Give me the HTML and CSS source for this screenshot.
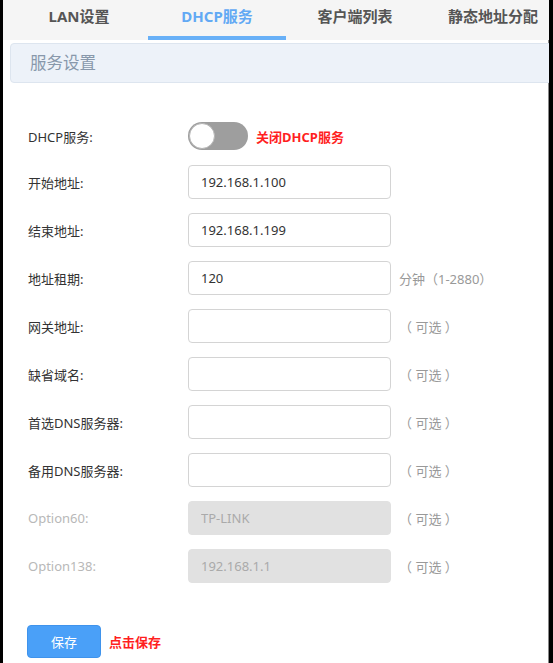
FILE: index.html
```html
<!DOCTYPE html>
<html lang="zh-CN">
<head>
<meta charset="utf-8">
<title>DHCP服务</title>
<link rel="stylesheet" href="styles.css">
</head>
<body>
<div class="frame">
  <div class="tabs">
    <div class="tab">LAN设置</div>
    <div class="tab active">DHCP服务</div>
    <div class="tab">客户端列表</div>
    <div class="tab">静态地址分配</div>
  </div>
  <div class="content">
    <div class="section-title">服务设置</div>
    <div class="form">
      <div class="row row-toggle">
        <label class="label">DHCP服务:</label>
        <span class="switch"><span class="knob"></span></span>
        <span class="note">关闭DHCP服务</span>
      </div>
      <div class="row">
        <label class="label">开始地址:</label>
        <input class="field" type="text" value="192.168.1.100">
      </div>
      <div class="row">
        <label class="label">结束地址:</label>
        <input class="field" type="text" value="192.168.1.199">
      </div>
      <div class="row">
        <label class="label">地址租期:</label>
        <input class="field" type="text" value="120">
        <span class="hint">分钟（1-2880）</span>
      </div>
      <div class="row">
        <label class="label">网关地址:</label>
        <input class="field" type="text" value="">
        <span class="hint">（ 可选 ）</span>
      </div>
      <div class="row">
        <label class="label">缺省域名:</label>
        <input class="field" type="text" value="">
        <span class="hint">（ 可选 ）</span>
      </div>
      <div class="row">
        <label class="label">首选DNS服务器:</label>
        <input class="field" type="text" value="">
        <span class="hint">（ 可选 ）</span>
      </div>
      <div class="row">
        <label class="label">备用DNS服务器:</label>
        <input class="field" type="text" value="">
        <span class="hint">（ 可选 ）</span>
      </div>
      <div class="row">
        <label class="label disabled">Option60:</label>
        <input class="field" type="text" value="TP-LINK" disabled>
        <span class="hint">（ 可选 ）</span>
      </div>
      <div class="row">
        <label class="label disabled">Option138:</label>
        <input class="field" type="text" value="192.168.1.1" disabled>
        <span class="hint">（ 可选 ）</span>
      </div>
    </div>
    <div class="actions">
      <button class="btn" type="button">保存</button>
      <span class="note">点击保存</span>
    </div>
  </div>
</div>
</body>
</html>
```

FILE: styles.css
```css
html, body {
  margin: 0;
  padding: 0;
  background: #fff;
}

body {
  font-family: "Noto Sans", "Noto Sans CJK SC", sans-serif;
  font-size: 13px;
  color: #333;
}

.frame {
  box-sizing: border-box;
  width: 553px;
  height: 663px;
  border-left: 3px solid #000;
  border-right: 4px solid #000;
  box-shadow: inset -1px 0 0 #888;
  overflow: hidden;
  background: #fff;
}

.tabs {
  display: flex;
  height: 40px;
  padding-left: 7px;
  background: #f5f5f5;
}

.tab {
  flex: 0 0 138px;
  box-sizing: border-box;
  height: 40px;
  line-height: 33px;
  text-align: center;
  font-size: 15px;
  font-weight: bold;
  color: #555;
  white-space: nowrap;
}

.tab.active {
  color: #62a9f4;
  border-bottom: 4px solid #68b0f7;
}

.content {
  padding-left: 7px;
}

.section-title {
  box-sizing: border-box;
  margin-top: 3px;
  margin-right: -12px;
  height: 40px;
  line-height: 38px;
  padding-left: 19px;
  border: 1px solid #dde5ef;
  border-radius: 4px;
  background: #edf2f9;
  font-size: 16.5px;
  color: #8898ab;
}

.form {
  padding-left: 18px;
  margin-top: 38px;
}

.row {
  display: flex;
  align-items: center;
  height: 34px;
  margin-bottom: 14px;
}

.row-toggle {
  height: 30px;
}

.label {
  flex: 0 0 160px;
  font-size: 13px;
  color: #333;
  white-space: nowrap;
}

.label.disabled {
  color: #b8b8b8;
}

.switch {
  position: relative;
  box-sizing: border-box;
  width: 60px;
  height: 28px;
  border-radius: 14px;
  background: #9e9e9e;
}

.knob {
  position: absolute;
  left: 1px;
  top: 1px;
  box-sizing: border-box;
  width: 26px;
  height: 26px;
  border-radius: 50%;
  background: #fff;
  border: 1px solid #b5b5b5;
}

.note {
  margin-left: 8px;
  color: #ff1f1f;
  font-weight: bold;
  font-size: 13px;
}

.field {
  box-sizing: border-box;
  width: 203px;
  height: 34px;
  margin: 0;
  padding: 0 12px;
  border: 1px solid #d4d4d4;
  border-radius: 4px;
  background: #fff;
  font-family: "Noto Sans", "Noto Sans CJK SC", sans-serif;
  font-size: 13px;
  color: #333;
  outline: none;
}

.field:disabled {
  background: #e1e1e1;
  border-color: #e1e1e1;
  color: #aaa;
}

.hint {
  margin-left: 8px;
  font-size: 13px;
  color: #999;
  white-space: nowrap;
}

.actions {
  display: flex;
  align-items: center;
  padding-left: 17px;
  margin-top: 42px;
}

.btn {
  box-sizing: border-box;
  width: 74px;
  height: 33px;
  margin: 0;
  border: 1px solid #3f93ec;
  border-radius: 4px;
  background: #4aa0f8;
  color: #fff;
  font-family: "Noto Sans", "Noto Sans CJK SC", sans-serif;
  font-size: 13px;
}
```
